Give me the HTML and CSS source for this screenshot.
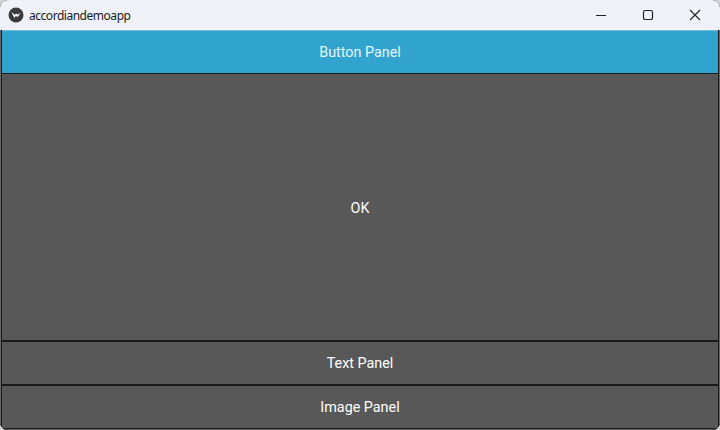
FILE: index.html
```html
<!DOCTYPE html>
<html lang="en">
<head>
<meta charset="utf-8">
<title>accordiandemoapp</title>
<link rel="stylesheet" href="styles.css">
</head>
<body>
<div class="window">
  <header class="titlebar">
    <svg class="app-icon" width="16" height="16" viewBox="0 0 16 16">
      <circle cx="8" cy="8" r="7.5" fill="#3a3b3d"/>
      <path d="M3.4 5.2 L6.4 11 L8 8.8 L9.4 10.2 L12.8 6 L9.6 7.4 L8.2 6.4 L7 7.8 Z" fill="#f1f3f6"/>
    </svg>
    <span class="title">accordiandemoapp</span>
    <div class="controls">
      <span class="control">
        <svg width="12" height="12" viewBox="0 0 12 12"><path d="M1 6.5H11" stroke="#222" stroke-width="1.1" fill="none"/></svg>
      </span>
      <span class="control">
        <svg width="12" height="12" viewBox="0 0 12 12"><rect x="1.5" y="1.5" width="9" height="9" rx="1.6" stroke="#222" stroke-width="1.2" fill="none"/></svg>
      </span>
      <span class="control">
        <svg width="12" height="12" viewBox="0 0 12 12"><path d="M1 1L11 11M11 1L1 11" stroke="#222" stroke-width="1.1" fill="none"/></svg>
      </span>
    </div>
  </header>
  <main class="accordion">
    <div class="panel-head panel-active">Button Panel</div>
    <div class="panel-body">OK</div>
    <div class="panel-head">Text Panel</div>
    <div class="panel-head">Image Panel</div>
  </main>
</div>
</body>
</html>
```
FILE: styles.css
```css
* { box-sizing: border-box; }
html, body {
  margin: 0;
  width: 720px;
  height: 430px;
  overflow: hidden;
  background: #d4d4d4;
}
.window {
  width: 720px;
  height: 430px;
  display: flex;
  flex-direction: column;
  border-radius: 8px;
  overflow: hidden;
  background: #000;
}
.titlebar {
  height: 30px;
  flex: none;
  display: flex;
  align-items: center;
  padding: 0 2px 0 8px;
  background: #eff3f9;
  color: #1a1a1a;
}
.app-icon { flex: none; }
.title {
  margin-left: 5px;
  font-family: "Noto Sans", sans-serif;
  font-size: 12px;
  letter-spacing: -0.47px;
}
.controls {
  margin-left: auto;
  display: flex;
}
.control {
  width: 47px;
  height: 30px;
  display: flex;
  align-items: center;
  justify-content: center;
}
.accordion {
  flex: 1;
  display: flex;
  flex-direction: column;
  padding: 0 1px 1px 1px;
  border: solid #666;
  border-width: 0 1px 1px 1px;
  background: #1a1a1a;
  font-family: Roboto, sans-serif;
  font-size: 14.35px;
  color: #fff;
}
.panel-head, .panel-body {
  display: flex;
  align-items: center;
  justify-content: center;
  background: #585858;
}
.panel-head {
  height: 44px;
  flex: none;
  padding-top: 1px;
  border-top: 2px solid #1a1a1a;
}
.panel-active {
  height: 43px;
  padding-top: 0;
  background: #30a3cf;
  border-top: 1px solid #6fbcd9;
  color: #e6f6fc;
}
.panel-body {
  flex: 1;
  border-top: 1px solid #1a1a1a;
  padding-top: 2px;
}
```
